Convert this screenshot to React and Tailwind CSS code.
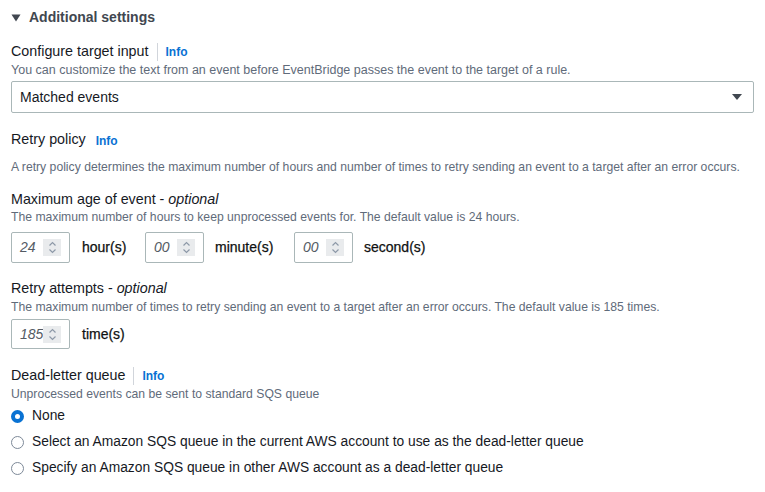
import React from "react";

const font = { fontFamily: '"Liberation Sans", Arial, sans-serif' };

function Info() {
  return <span className="text-[12px] font-bold text-[#0972d3]">Info</span>;
}

function Sep() {
  return <span className="mx-[8px] inline-block h-[18px] w-px bg-[#d1d5db]" />;
}

function Spinner() {
  return (
    <span className="flex h-[17px] w-[18px] flex-col items-center justify-center bg-[#e9ebed]">
      <svg width="9" height="13" viewBox="0 0 9 13" fill="none" stroke="#8d99a8" strokeWidth="1.2">
        <path d="M1.5 4.5 L4.5 1.5 L7.5 4.5" />
        <path d="M1.5 8.5 L4.5 11.5 L7.5 8.5" />
      </svg>
    </span>
  );
}

function NumInput({ value, h = "h-[31px]" }) {
  return (
    <div className={`flex ${h} w-[59px] items-center justify-between rounded-[2px] border border-[#aab7b8] bg-white pl-[8px] pr-[8px]`}>
      <span className="text-[14px] italic text-[#545b64]">{value}</span>
      <Spinner />
    </div>
  );
}

function Unit({ children, className = "" }) {
  return <span className={`text-[14px] text-[#0f1111] [-webkit-text-stroke:0.25px_#0f1111] ${className}`}>{children}</span>;
}

function Radio({ checked, label }) {
  return (
    <div className="flex h-[26px] items-center">
      {checked ? (
        <span className="box-border inline-block h-[13px] w-[13px] rounded-full border-[4px] border-[#0972d3] bg-white" />
      ) : (
        <span className="box-border inline-block h-[13px] w-[13px] rounded-full border border-[#7d8998] bg-white" />
      )}
      <span className="ml-[8px] text-[13.8px] text-[#16191f]">{label}</span>
    </div>
  );
}

const desc = "text-[12.2px] leading-[16px] text-[#5f6b7a]";

export default function App() {
  return (
    <div className="h-[492px] w-[765px] overflow-hidden bg-white pl-[11px] pr-[11px] text-[#16191f]" style={font}>
      <div className="flex h-[34px] items-center pt-[1px]">
        <svg width="10" height="8" viewBox="0 0 10 8">
          <path d="M0.5 0.5 L9.5 0.5 L5 7.5 Z" fill="#414750" />
        </svg>
        <span className="ml-[8px] text-[14px] font-bold text-[#414750]">Additional settings</span>
      </div>

      <div className="mt-[8px] flex h-[20px] items-center">
        <span className="text-[14.3px]">Configure target input</span>
        <Sep />
        <Info />
      </div>
      <div className="text-[12.5px] leading-[16px] text-[#5f6b7a]">
        You can customize the text from an event before EventBridge passes the event to the target of a rule.
      </div>
      <div className="mt-[3px] flex h-[32px] items-center justify-between rounded-[2px] border border-[#aab7b8] pl-[8px] pr-[10px]">
        <span className="text-[14px]">Matched events</span>
        <svg width="12" height="8" viewBox="0 0 12 8">
          <path d="M1 1 L11 1 L6 7 Z" fill="#414750" />
        </svg>
      </div>

      <div className="mt-[17px] flex h-[20px] items-center">
        <span className="text-[14.3px]">Retry policy</span>
        <span className="ml-[10px]"><Info /></span>
      </div>
      <div className={`mt-[9px] ${desc}`}>
        A retry policy determines the maximum number of hours and number of times to retry sending an event to a target after an error occurs.
      </div>

      <div className="mt-[14px] text-[14.3px] leading-[20px]">
        Maximum age of event - <i>optional</i>
      </div>
      <div className={desc}>
        The maximum number of hours to keep unprocessed events for. The default value is 24 hours.
      </div>
      <div className="mt-[7px] flex items-center">
        <NumInput value="24" />
        <Unit className="ml-[12px] w-[63px]">hour(s)</Unit>
        <NumInput value="00" />
        <Unit className="ml-[11px] w-[79px]">minute(s)</Unit>
        <NumInput value="00" />
        <Unit className="ml-[11px]">second(s)</Unit>
      </div>

      <div className="mt-[15px] text-[14.3px] leading-[20px]">
        Retry attempts - <i>optional</i>
      </div>
      <div className={`mt-[1px] ${desc}`}>
        The maximum number of times to retry sending an event to a target after an error occurs. The default value is 185 times.
      </div>
      <div className="mt-[4px] flex items-center">
        <NumInput value="185" h="h-[30px]" />
        <Unit className="ml-[12px]">time(s)</Unit>
      </div>

      <div className="mt-[17px] flex h-[20px] items-center">
        <span className="text-[14.3px]">Dead-letter queue</span>
        <Sep />
        <Info />
      </div>
      <div className={desc}>
        Unprocessed events can be sent to standard SQS queue
      </div>
      <div className="mt-[1px]">
        <Radio checked label="None" />
        <Radio label="Select an Amazon SQS queue in the current AWS account to use as the dead-letter queue" />
        <Radio label="Specify an Amazon SQS queue in other AWS account as a dead-letter queue" />
      </div>
    </div>
  );
}
